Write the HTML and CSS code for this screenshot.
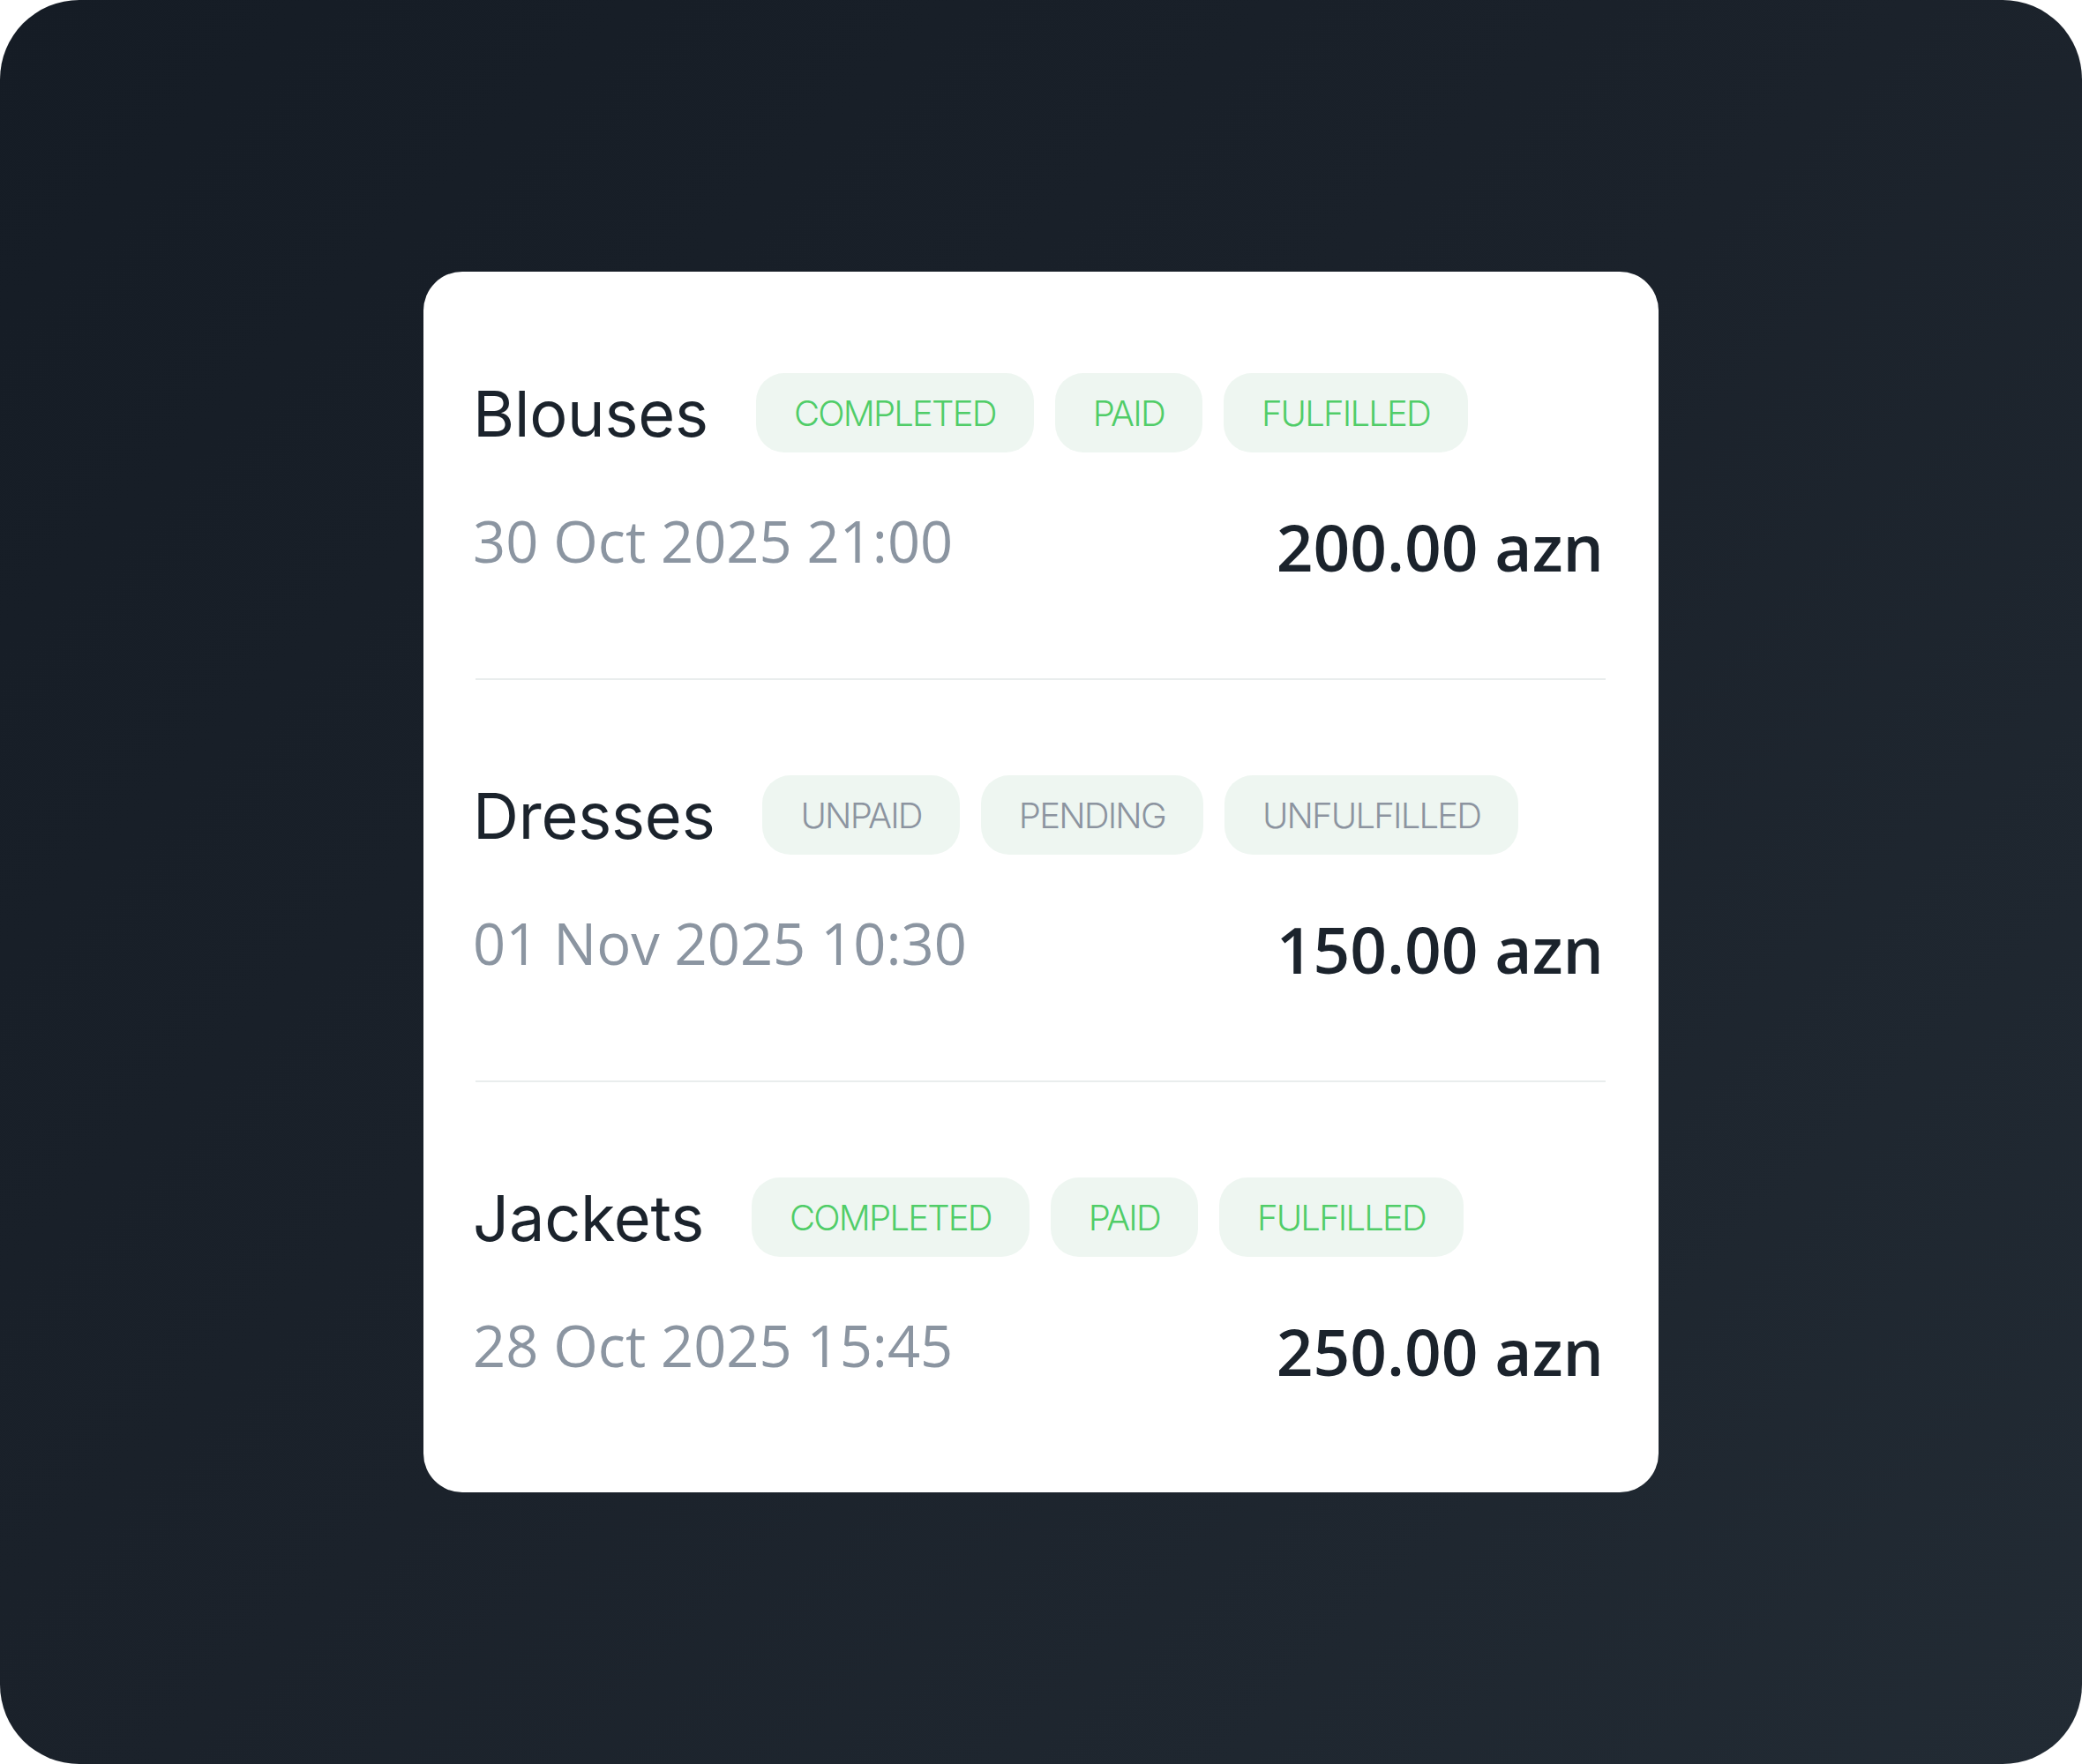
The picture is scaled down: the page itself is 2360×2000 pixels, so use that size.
FILE: index.html
```html
<!DOCTYPE html>
<html lang="en">
<head>
<meta charset="utf-8">
<title>Orders</title>
<link rel="stylesheet" href="styles.css">
</head>
<body>
<div class="frame">
  <div class="card">
    <div class="order">
      <div class="order-head">
        <span class="title">Blouses</span>
        <span class="chip chip-ok">COMPLETED</span>
        <span class="chip chip-ok">PAID</span>
        <span class="chip chip-ok">FULFILLED</span>
      </div>
      <div class="order-meta">
        <span class="date">30 Oct 2025 21:00</span>
        <span class="amount">200.00 azn</span>
      </div>
    </div>
    <div class="order">
      <div class="order-head">
        <span class="title">Dresses</span>
        <span class="chip chip-muted">UNPAID</span>
        <span class="chip chip-muted">PENDING</span>
        <span class="chip chip-muted">UNFULFILLED</span>
      </div>
      <div class="order-meta">
        <span class="date">01 Nov 2025 10:30</span>
        <span class="amount">150.00 azn</span>
      </div>
    </div>
    <div class="order">
      <div class="order-head">
        <span class="title">Jackets</span>
        <span class="chip chip-ok">COMPLETED</span>
        <span class="chip chip-ok">PAID</span>
        <span class="chip chip-ok">FULFILLED</span>
      </div>
      <div class="order-meta">
        <span class="date">28 Oct 2025 15:45</span>
        <span class="amount">250.00 azn</span>
      </div>
    </div>
  </div>
</div>
</body>
</html>
```

FILE: styles.css
```css
html, body {
  margin: 0;
  padding: 0;
  background: #ffffff;
}

.frame {
  width: 2360px;
  height: 2000px;
  border-radius: 90px;
  background: linear-gradient(135deg, #151c25 0%, #1b222b 50%, #222b34 100%);
  display: flex;
  align-items: center;
  justify-content: center;
}

.card {
  width: 1400px;
  box-sizing: border-box;
  padding: 7px 60px 11px 59px;
  background: #ffffff;
  border-radius: 44px;
  display: flex;
  flex-direction: column;
}

.order {
  padding: 108px 0 99px;
  border-bottom: 2px solid #e9eded;
  display: flex;
  flex-direction: column;
  gap: 56px;
}

.order:last-child {
  border-bottom: none;
}

.order-head {
  height: 90px;
  display: flex;
  align-items: center;
  gap: 24px;
}

.title {
  font-family: Inter, "Noto Sans", sans-serif;
  font-size: 72px;
  font-weight: 400;
  letter-spacing: -0.2px;
  color: #1b232c;
  margin-right: 30px;
  margin-left: -3px;
}

.chip {
  height: 90px;
  box-sizing: border-box;
  padding: 0 43px;
  border-radius: 32px;
  background: #eef6f1;
  display: flex;
  align-items: center;
  font-family: Inter, "Noto Sans", sans-serif;
  font-size: 40px;
  font-weight: 300;
  letter-spacing: -1.8px;
}

.chip-ok {
  color: #50cd68;
}

.chip-muted {
  color: #8c94a0;
}

.order-meta {
  display: flex;
  justify-content: space-between;
  align-items: flex-start;
}

.date {
  font-family: "Open Sans", "Noto Sans", sans-serif;
  font-size: 65px;
  line-height: 88px;
  font-weight: 400;
  color: #8b95a1;
  margin-left: -3px;
}

.amount {
  font-family: "Open Sans", "Noto Sans", sans-serif;
  font-size: 73px;
  line-height: 101px;
  font-weight: 600;
  color: #1b232c;
  margin-right: 2px;
}
```
